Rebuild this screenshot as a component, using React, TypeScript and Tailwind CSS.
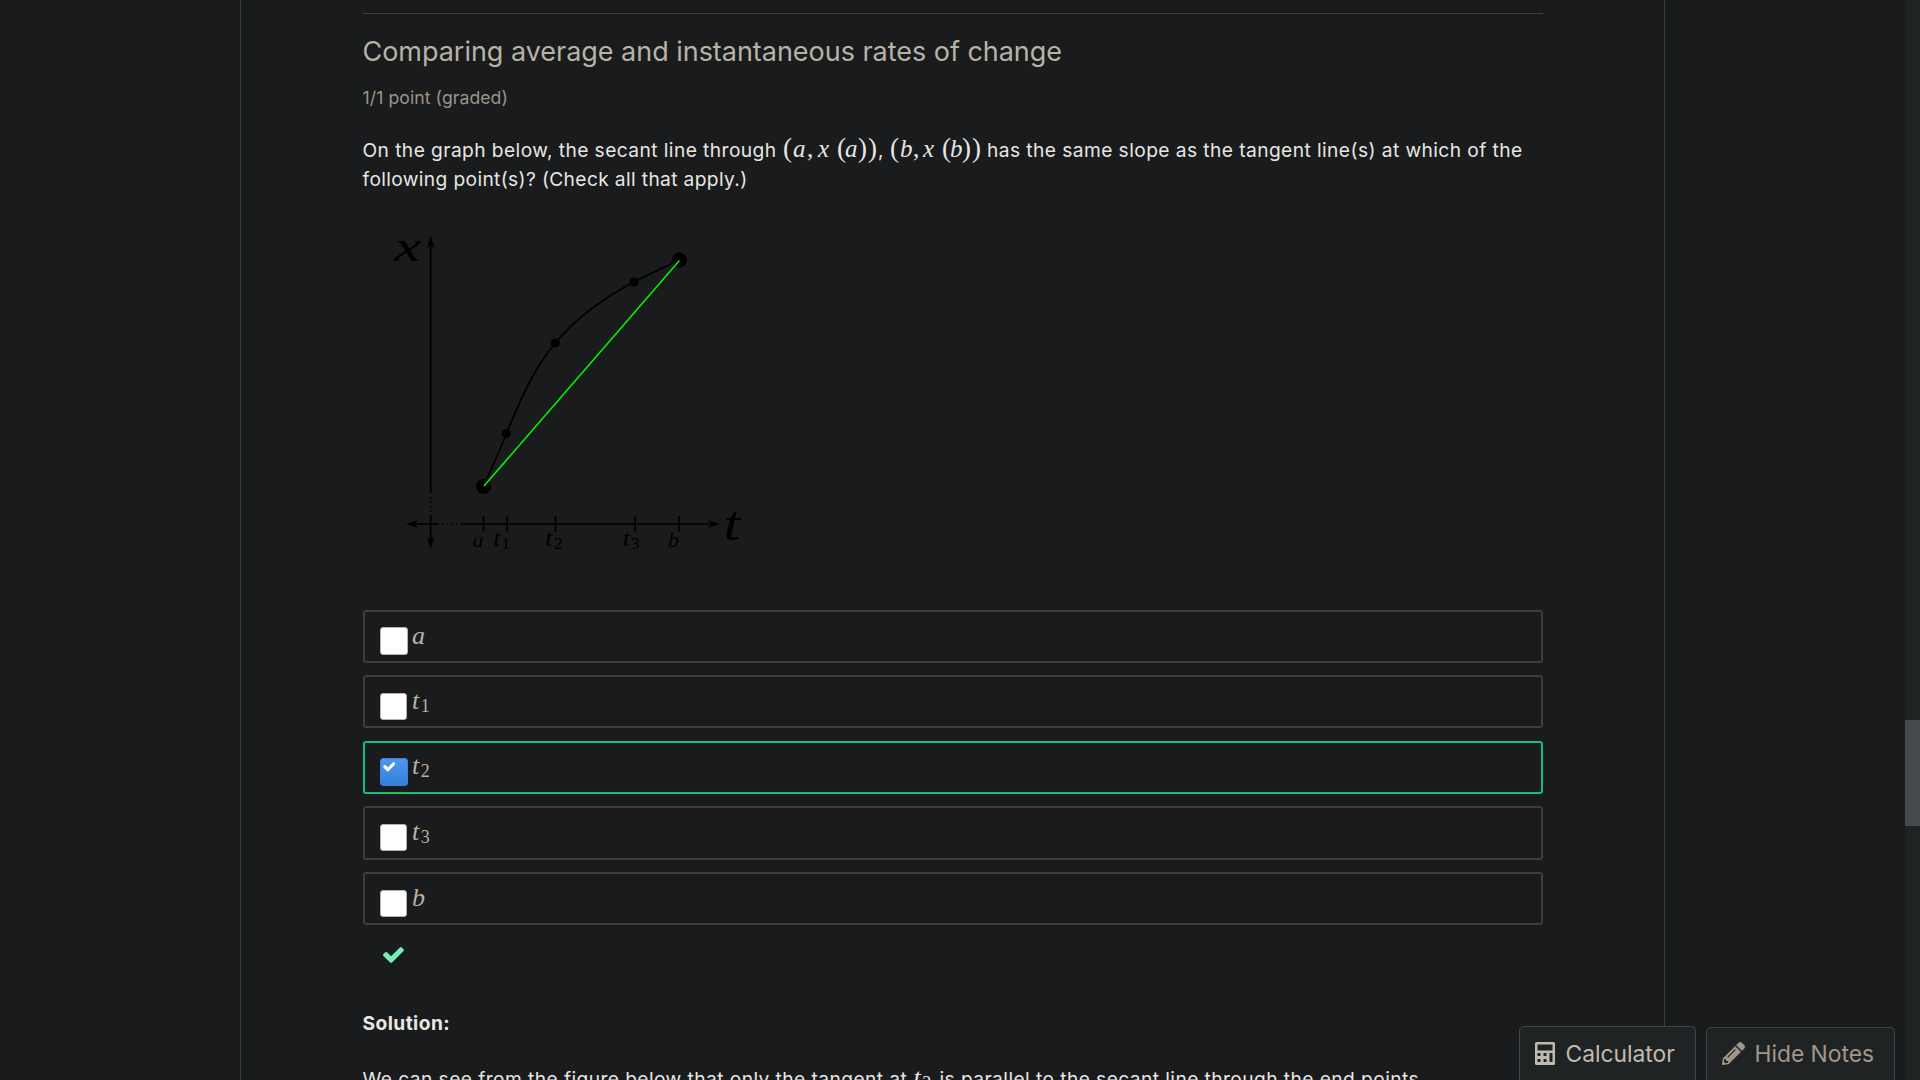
import React from "react";
import { FaPencilAlt } from "react-icons/fa";

function G({ w, c, kind = "var" }: { w: string; c: string; kind?: "var" | "paren" | "comma" }) {
  const style =
    kind === "var" ? "italic text-[25px]" : kind === "paren" ? "text-[27px]" : "text-[25px]";
  return (
    <span className={`inline-block shrink-0 font-['Liberation_Serif',serif] leading-none tracking-normal ${w} ${style}`}>
      {c}
    </span>
  );
}

function Sub({ base, sub }: { base: string; sub?: string }) {
  return (
    <span className="font-['Liberation_Serif',serif] text-[26px] leading-none tracking-normal italic">
      {base}
      {sub && <span className="relative top-[3px] ml-[1.5px] text-[18px] not-italic">{sub}</span>}
    </span>
  );
}

function Check({ className }: { className: string }) {
  return (
    <svg className={`block ${className}`} viewBox="121 334 1550 1188" fill="currentColor">
      <path d="M1671 566q0 40-28 68l-724 724-136 136q-28 28-68 28t-68-28l-136-136-362-362q-28-28-28-68t28-68l136-136q28-28 68-28t68 28l294 295 656-657q28-28 68-28t68 28l136 136q28 28 28 68z" />
    </svg>
  );
}

const choices = [
  { base: "a", h: "h-[53px]", m: "mb-[12px]", box: "w-[28px] h-[28px] mt-[15px] mr-[5px]", t: "mt-[11px]" },
  { base: "t", sub: "1", h: "h-[53px]", m: "mb-[13px]", box: "w-[27px] h-[27px] mt-[16px] mr-[6px]", t: "mt-[11px]" },
  { base: "t", sub: "2", checked: true, h: "h-[53px]", m: "mb-[12px]", box: "w-[28px] h-[28px] mt-[15px] mr-[5px]", t: "mt-[10px]" },
  { base: "t", sub: "3", h: "h-[54px]", m: "mb-[12px]", box: "w-[27px] h-[27px] mt-[16px] mr-[6px]", t: "mt-[11px]" },
  { base: "b", h: "h-[53px]", m: "mb-0", box: "w-[27px] h-[27px] mt-[16px] mr-[6px]", t: "mt-[11px]" },
];

function Graph() {
  const ticks = [133.5, 157, 205.5, 285, 329];
  return (
    <svg className="block" width="420" height="340" viewBox="0 0 420 340">
      <g stroke="#000" strokeWidth="1.7" fill="none">
        <path d="M80.7 20V273" />
        <path d="M80.7 277V294" strokeDasharray="1.3 3.3" />
        <path d="M80.7 295V320" />
        <path d="M62 304H89M111 304H362" />
        <path d="M92 304H111" strokeDasharray="1.3 3.3" />
        {ticks.map((x) => (
          <path key={x} d={`M${x} 296V311.5`} />
        ))}
        <path d="M133.5 266.5C141 250 150 230 156.5 213.5C168 186 181 152 205.3 123C225 99 254 78 284 62C300 53.5 315 47 329.5 40" />
      </g>
      <path d="M80.7 15L77 28L80.7 25L84.4 28ZM80.7 329L77 317L80.7 320L84.4 317ZM56 304L68 300.3L65 304L68 307.7ZM370 304L358 300.3L361 304L358 307.7Z" />
      <circle cx="133.5" cy="266.5" r="7.6" />
      <circle cx="329.5" cy="40" r="7.6" />
      <circle cx="156.4" cy="213.6" r="4.6" />
      <circle cx="205.3" cy="123" r="4.6" />
      <circle cx="284" cy="62" r="4.6" />
      <path d="M134 266L329.5 40.5" stroke="#00f800" strokeWidth="1.5" />
      <g className="font-['Liberation_Serif',serif] italic" fill="#000">
        <text x="44" y="41" fontSize="45" textLength="27" lengthAdjust="spacingAndGlyphs">x</text>
        <text x="373.5" y="320" fontSize="48" textLength="17" lengthAdjust="spacingAndGlyphs">t</text>
        <text x="122.5" y="326.5" fontSize="22">a</text>
        <text x="143.5" y="326" fontSize="24">t</text>
        <text x="151.5" y="329" fontSize="17" fontStyle="normal">1</text>
        <text x="195.5" y="325.5" fontSize="24">t</text>
        <text x="204" y="328.5" fontSize="17" fontStyle="normal">2</text>
        <text x="273" y="325.5" fontSize="24">t</text>
        <text x="281" y="328.5" fontSize="17" fontStyle="normal">3</text>
        <text x="318" y="326.5" fontSize="22">b</text>
      </g>
    </svg>
  );
}

export default function App() {
  return (
    <div className="relative flex h-[1080px] w-[1920px] overflow-hidden bg-[#1a1b1c] font-['Inter',sans-serif] text-[#e8e6e3]">
      <main className="ml-[240px] h-full w-[1425px] shrink-0 border-x border-[#3a3d3f] pl-[122px]">
        <div className="mt-[13px] w-[1180px] border-t border-[#3b3e40]">
          <h3 className="mt-[20px] -ml-[0.5px] text-[27px] leading-[36px] tracking-[-0.03px] whitespace-nowrap text-[#b8b2a7]"><span>Comparing average and instantaneous rates of change</span></h3>
          <div className="mt-[15px] -ml-[0.5px] text-[17.6px] leading-[26px] tracking-[0.08px] whitespace-nowrap text-[#9c9488]"><span>1/1 point (graded)</span></div>
          <div className="mt-[24px] -ml-[0.5px] text-[19.2px] leading-[29px] tracking-[0.42px]">
            <div className="flex h-[30px] items-baseline whitespace-nowrap">
              <span className="w-[420.5px] shrink-0">On the graph below, the secant line through</span>
              <G w="w-[10px]" c="(" kind="paren" /><G w="w-[14px]" c="a" /><G w="w-[11px]" c="," kind="comma" /><G w="w-[19px]" c="x" />
              <G w="w-[8px]" c="(" kind="paren" /><G w="w-[13px]" c="a" /><G w="w-[10px]" c=")" kind="paren" /><G w="w-[10px]" c=")" kind="paren" />
              <span className="w-[12px]">,</span>
              <G w="w-[10px]" c="(" kind="paren" /><G w="w-[13px]" c="b" /><G w="w-[10px]" c="," kind="comma" /><G w="w-[19px]" c="x" />
              <G w="w-[8px]" c="(" kind="paren" /><G w="w-[12px]" c="b" /><G w="w-[10px]" c=")" kind="paren" /><G w="w-[15px]" c=")" kind="paren" />
              <span>has the same slope as the tangent line(s) at which of the</span>
            </div>
            <div className="tracking-[0.36px]"><span>following point(s)? (Check all that apply.)</span></div>
          </div>
          <div className="-ml-[13px] mt-[26px] h-[390px]"><Graph /></div>
          <div>
            {choices.map((c, i) => (
              <div key={i} className={`flex items-start rounded-[3px] border-2 pl-[15px] ${c.h} ${c.m} ${c.checked ? "border-[#14bf76]" : "border-[#3b3d3f]"}`}>
                <span className={`${c.box} shrink-0 rounded-[3px] border ${c.checked ? "border-[#3b82dc] bg-linear-to-b from-[#5296ea] to-[#3380e0]" : "border-[#b8b2a7] bg-white"}`}>
                  {c.checked && <Check className="mt-[3px] ml-[1.5px] h-[9.5px] w-[12.5px] text-white" />}
                </span>
                <span className={`-ml-px h-[30px] text-[#b8b2a7] ${c.t}`}><Sub base={c.base} sub={c.sub} /></span>
              </div>
            ))}
          </div>
          <Check className="mt-[22px] ml-[20px] h-[16px] w-[21px] text-[#77edba]" />
          <div className="mt-[46px] -ml-[0.5px] text-[19.2px] leading-[29px] font-bold tracking-[0.42px]"><span>Solution:</span></div>
          <div className="mt-[27px] -ml-[0.5px] flex items-baseline text-[19.2px] leading-[29px] tracking-[0.42px] whitespace-nowrap">
            <span className="w-[551px] shrink-0">We can see from the figure below that only the tangent at</span>
            <span className="w-[26px] shrink-0"><Sub base="t" sub="2" /></span>
            <span>is parallel to the secant line through the end points.</span>
          </div>
        </div>
      </main>
      <div className="absolute right-[25px] bottom-0 flex items-end gap-[10px] text-[22.8px]">
        <div className="flex h-[54px] w-[177px] rounded-t-[5px] border border-b-0 border-[#3e4345] bg-[#202324] pt-[15px] pl-[15px] whitespace-nowrap text-[#c0bab0]">
          <svg width="20" height="23" viewBox="0 0 20 23" fill="currentColor"><path fillRule="evenodd" d="M1.5 0H18.5Q20 0 20 1.5V21.5Q20 23 18.5 23H1.5Q0 23 0 21.5V1.5Q0 0 1.5 0ZM2.5 2.5V8.5H17.5V2.5ZM2.5 11V14H5.5V11ZM8.5 11V14H11.5V11ZM14.5 11V20H17.5V11ZM2.5 17V20H5.5V17ZM8.5 17V20H11.5V17Z" /></svg>
          <span className="ml-[10.5px] leading-[23px]">Calculator</span>
        </div>
        <div className="flex h-[53px] w-[189px] rounded-t-[5px] border border-b-0 border-[#3e4345] bg-[#202324] pt-[14px] pl-[15px] whitespace-nowrap text-[#a0978a]">
          <FaPencilAlt className="h-[23px] w-[23px] shrink-0" />
          <span className="ml-[9.5px] leading-[23px]">Hide Notes</span>
        </div>
      </div>
      <div className="absolute top-0 right-0 h-full w-[15px] bg-[#202324] pt-[720px]">
        <div className="h-[106px] bg-[#454a4c]" />
      </div>
    </div>
  );
}
